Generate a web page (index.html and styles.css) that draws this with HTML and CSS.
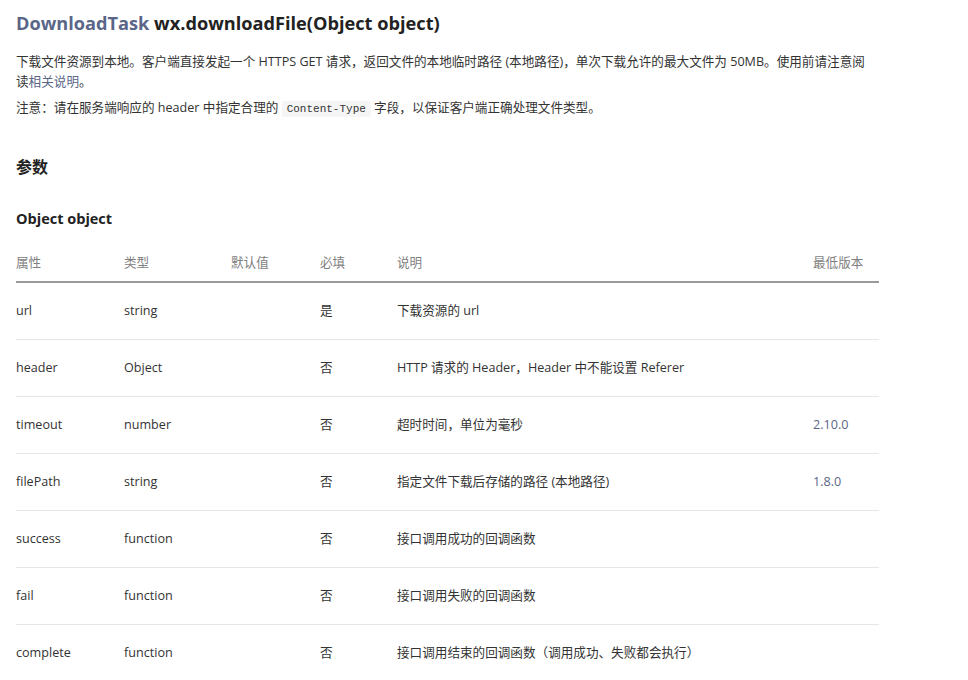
FILE: index.html
```html
<!DOCTYPE html>
<html lang="zh-CN">
<head>
<meta charset="utf-8">
<title>wx.downloadFile</title>
<link rel="stylesheet" href="styles.css">
</head>
<body>
<main class="doc">
  <h1 class="title"><a class="title-link" href="#">DownloadTask</a> wx.downloadFile(Object object)</h1>
  <p class="para">下载文件资源到本地。客户端直接发起一个 HTTPS GET 请求，返回文件的本地临时路径 (本地路径)，单次下载允许的最大文件为 50MB。使用前请注意阅读<a class="link" href="#">相关说明</a>。</p>
  <p class="para note">注意：请在服务端响应的 header 中指定合理的 <code class="code">Content-Type</code> 字段，以保证客户端正确处理文件类型。</p>
  <h3 class="section">参数</h3>
  <h4 class="subsection">Object object</h4>
  <table class="params">
    <colgroup>
      <col class="c1"><col class="c2"><col class="c3"><col class="c4"><col class="c5"><col class="c6">
    </colgroup>
    <thead>
      <tr><th>属性</th><th>类型</th><th>默认值</th><th>必填</th><th>说明</th><th>最低版本</th></tr>
    </thead>
    <tbody>
      <tr><td>url</td><td>string</td><td></td><td>是</td><td>下载资源的 url</td><td></td></tr>
      <tr><td>header</td><td>Object</td><td></td><td>否</td><td>HTTP 请求的 Header，Header 中不能设置 Referer</td><td></td></tr>
      <tr><td>timeout</td><td>number</td><td></td><td>否</td><td>超时时间，单位为毫秒</td><td><a class="ver" href="#">2.10.0</a></td></tr>
      <tr><td>filePath</td><td>string</td><td></td><td>否</td><td>指定文件下载后存储的路径 (本地路径)</td><td><a class="ver" href="#">1.8.0</a></td></tr>
      <tr><td>success</td><td>function</td><td></td><td>否</td><td>接口调用成功的回调函数</td><td></td></tr>
      <tr><td>fail</td><td>function</td><td></td><td>否</td><td>接口调用失败的回调函数</td><td></td></tr>
      <tr><td>complete</td><td>function</td><td></td><td>否</td><td>接口调用结束的回调函数（调用成功、失败都会执行）</td><td></td></tr>
    </tbody>
  </table>
</main>
</body>
</html>
```

FILE: styles.css
```css
html, body {
  margin: 0;
  padding: 0;
  background: #fff;
}
body {
  font-family: "Open Sans", "Noto Sans CJK SC", sans-serif;
  color: #333;
  font-size: 12.6px;
}
.doc {
  width: 863px;
  padding: 0 16px;
  display: flow-root;
}
.title {
  margin: 9px 0 0;
  font-size: 18.2px;
  line-height: 28px;
  font-weight: 700;
  color: #222;
}
.title-link {
  color: #5a6688;
  text-decoration: none;
}
.para {
  margin: 15px 0 0;
  line-height: 20px;
  max-width: 858px;
}
.note {
  margin-top: 6px;
}
.link {
  color: #5a6688;
  text-decoration: none;
}
.code {
  font-family: "Liberation Mono", "DejaVu Sans Mono", monospace;
  font-size: 11px;
  line-height: 1;
  background: #f5f5f5;
  padding: 2px 5px;
  border-radius: 2px;
  color: #333;
}
.section {
  margin: 37px 0 0;
  font-size: 16px;
  line-height: 24px;
  font-weight: 700;
  color: #222;
}
.subsection {
  margin: 29px 0 0;
  font-size: 14.5px;
  line-height: 22px;
  font-weight: 700;
  color: #222;
}
.params {
  margin-top: 14px;
  width: 863px;
  border-collapse: collapse;
  table-layout: fixed;
}
.c1 { width: 108px; }
.c2 { width: 107px; }
.c3 { width: 89px; }
.c4 { width: 77px; }
.c5 { width: 416px; }
.c6 { width: 66px; }
.params th {
  text-align: left;
  font-weight: 400;
  color: #808080;
  padding: 9px 0 8px;
  line-height: 20px;
  border-bottom: 2px solid #999;
}
.params td {
  padding: 18px 0;
  line-height: 20px;
  border-bottom: 1px solid #e6e6e6;
  color: #333;
  vertical-align: middle;
}
.params tbody tr:last-child td {
  border-bottom: none;
}
.ver {
  color: #5a6688;
  text-decoration: none;
}
```
